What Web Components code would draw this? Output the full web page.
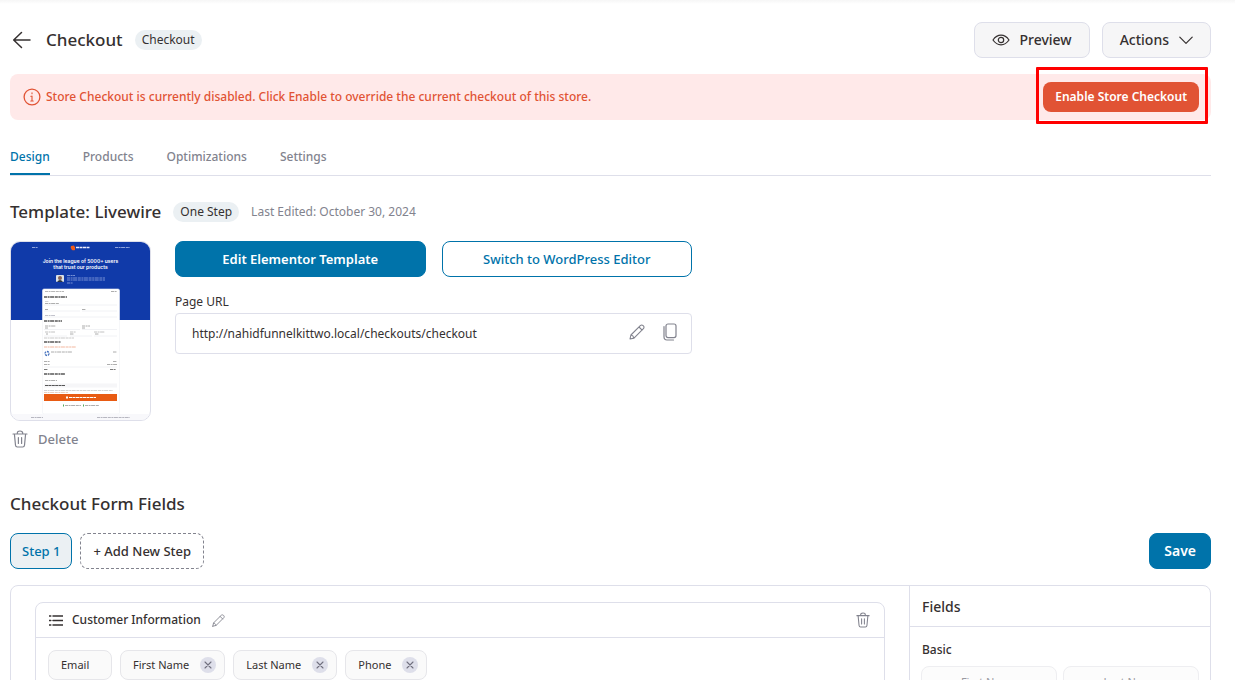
<!DOCTYPE html>
<html lang="en">
<head>
<meta charset="utf-8">
<meta name="viewport" content="width=device-width, initial-scale=1">
<title>Checkout</title>
<style>
  :root {
    --primary: #0073aa;
    --danger: #e15334;
    --ink: #353030;
    --muted: #82838e;
    --line: #dedfea;
    --tint: #ebf0f3;
  }
  html, body { margin: 0; height: 100%; }
  body {
    font: 500 13px/20px "Noto Sans", "Open Sans", sans-serif;
    color: var(--ink);
    background: #fff;
    overflow: hidden;
  }
</style>
</head>
<body>
<checkout-page></checkout-page>

<script>
const define = (name, html, setup) => {
  const template = document.createElement('template');
  template.innerHTML = `<style>
    *, *::before, *::after { box-sizing: border-box; }
    button, input { font: inherit; color: inherit; margin: 0; }
    button { cursor: pointer; background: none; border: 0; padding: 0; }
    h1, h2, h3, p { margin: 0; font-weight: inherit; font-size: inherit; }
  </style>${html}`;
  customElements.define(name, class extends HTMLElement {
    constructor() {
      super();
      this.attachShadow({ mode: 'open' }).append(template.content.cloneNode(true));
    }
    connectedCallback() { if (setup) setup.call(this, this.shadowRoot); }
  });
};

const icons = {
  back: ['0 0 20 18', '<path d="M9.500 1.500 1.700 9l7.800 7.500M2 9h16" stroke-width="1.500"/>'],
  eye: ['0 0 18 12', '<path d="M1 6c2.2-3.200 4.900-4.800 8-4.800s5.800 1.600 8 4.800c-2.200 3.200-4.900 4.800-8 4.800S3.200 9.200 1 6Z" stroke-width="1.200"/><circle cx="9" cy="6" r="2.700" stroke-width="1.200"/>'],
  down: ['0 0 14 9', '<path d="m.8 1.200 6.200 6.200 6.200-6.200" stroke-width="1.200"/>'],
  info: ['0 0 18 18', '<circle cx="9" cy="9" r="7.900" stroke-width="1.300"/><path d="M9 8v5M9 4.800v1M7.800 8.200H9M7.800 13h2.400" stroke-width="1.100"/>'],
  trash: ['0 0 16 18', '<path d="M1 4h14M5.300 4V3.200C5.300 1.800 6.300 1 8 1s2.700.8 2.700 2.200V4M2.400 4l1.100 11.300c.1 1 .8 1.700 1.800 1.700h5.400c1 0 1.700-.7 1.800-1.700L13.600 4M6.400 7.500v6M9.600 7.500v6" stroke-width="1.200"/>'],
  pencil: ['0 0 16 16', '<path d="M1 15l.9-4L11.300 1.700c.8-.8 2-.8 2.800-.1l.3.300c.8.8.8 2 0 2.800L5 14.100 1 15ZM10 3l3.100 3.100M1.900 11c1.500.2 2.600 1.300 3.100 3.100" stroke-width="1.100"/>'],
  copy: ['0 0 14 18', '<rect x="3" y="1" width="10" height="13.600" rx="2" stroke-width="1.200"/><path d="M1 3.500v10.300C1 15.700 2.200 17 4 17h6.500" stroke-width="1.200"/>'],
  list: ['0 0 14 12', '<path d="M4 2h10M4 6.500h10M4 11h10M.3 2h1.500M.3 6.500h1.500M.3 11h1.500" stroke-width="1.500"/>'],
  close: ['0 0 8 8', '<path d="m1 1 6 6M7 1 1 7" stroke-width="1.100"/>']
};
define('ui-icon', `<style>
  :host { display: inline-flex; flex: none; }
  svg { display: block; fill: none; stroke: currentColor; stroke-linecap: round; stroke-linejoin: round; }
</style>`, function (root) {
  const [box, shape] = icons[this.getAttribute('name')];
  const [, , w, h] = box.split(' ').map(Number);
  const width = Number(this.getAttribute('width')) || w;
  root.innerHTML += `<svg viewBox="${box}" width="${width}" height="${Math.round(width * h / w)}" aria-hidden="true">${shape}</svg>`;
});

define('ui-button', `<style>
  :host { display: inline-flex; flex: none; }
  button { flex: 1; display: inline-flex; align-items: center; justify-content: center;
    gap: 10px; height: 36px; padding: 0 17px; border: 1px solid var(--line); border-radius: 8px;
    background: #f6f6f7; white-space: nowrap; }
  :host([kind=primary]) button { background: var(--primary); border-color: var(--primary); color: #fff; font-weight: 600; padding: 0 14px; }
  :host([kind=outline]) button { background: #fff; border-color: var(--primary); color: var(--primary); }
  :host([kind=danger]) button { background: var(--danger); border: 0; color: #fff; font-size: 12px; font-weight: 600; height: 30px; padding: 0 12px; }
  :host([kind=step]) button { background: var(--tint); border-color: var(--primary); color: var(--primary); padding: 0 11px; }
  :host([kind=dashed]) button { background: #fff; border: 1px dashed #82838e; padding: 0 12px; }
</style><button type="button"><slot></slot></button>`);

define('ui-badge', `<style>
  :host { display: inline-block; flex: none; padding: 0 7px; border-radius: 10px; background: var(--tint);
    font-size: 12px; line-height: 20px; font-weight: 400; }
</style><slot></slot>`);

define('page-header', `<style>
  :host { display: flex; align-items: center; height: 36px; }
  h1 { font-size: 17px; line-height: 24px; margin: 0 12px 0 14px; }
  .actions { margin-left: auto; display: flex; gap: 12px; font-size: 14px; }
  .back { display: flex; padding: 0 0 0 2px; }
</style>
<button class="back" type="button" aria-label="Back"><ui-icon name="back"></ui-icon></button>
<h1>Checkout</h1><ui-badge>Checkout</ui-badge>
<div class="actions">
  <ui-button><ui-icon name="eye"></ui-icon><span>Preview</span></ui-button>
  <ui-button><span>Actions</span><ui-icon name="down"></ui-icon></ui-button>
</div>`);

define('notice-bar', `<style>
  :host { display: flex; align-items: center; gap: 5px; height: 46px; padding: 0 12px 0 13px;
    border-radius: 8px; background: #ffe9e9; color: var(--danger); font-size: 12px; }
  .action { position: relative; display: flex; margin-left: auto; }
  .highlight { position: absolute; inset: -15px -9px -12px -7px; border: 3px solid #ff0000; border-radius: 1px; pointer-events: none; }
</style>
<ui-icon name="info"></ui-icon><p><slot></slot></p>
<div class="action"><ui-button kind="danger">Enable Store Checkout</ui-button><span class="highlight"></span></div>`);

define('page-tabs', `<style>
  :host { display: block; border-bottom: 1px solid var(--line); font-size: 12px; }
  nav { display: flex; gap: 33px; }
  a { color: var(--muted); text-decoration: none; padding: 8px 0 6px; border-bottom: 2px solid transparent; }
  a[aria-current] { color: var(--primary); border-color: var(--primary); }
</style>
<nav aria-label="Sections"><a href="#design" aria-current="page">Design</a><a href="#products">Products</a><a href="#optimizations">Optimizations</a><a href="#settings">Settings</a></nav>`);

define('template-preview', `<style>
  :host { display: block; box-sizing: border-box; width: 141px; height: 180px; border: 1px solid var(--line); border-radius: 10px; overflow: hidden; }
  svg { display: block; width: 100%; height: 100%; }
  .t { fill: #fff; font: 600 5px Inter, sans-serif; }
  .dash line { stroke-dasharray: 3 .6 2 .5 4 .7; opacity: .75; }
</style>
<svg viewBox="0 0 139 178" role="img" aria-label="Livewire template preview">
  <rect width="139" height="78" fill="#103aa9"/>
  <g class="dash" stroke="#b9c7ef" stroke-width="1"><line x1="21" x2="27" y1="5.500" y2="5.500"/><line x1="104" x2="119" y1="5.500" y2="5.500"/></g>
  <path d="M60 4a3 3 0 0 0 4 4V4.500h-1V3.500Z" fill="#f05a19"/><line x1="65" x2="79" y1="5.500" y2="5.500" stroke="#eef" stroke-width="1.500" stroke-dasharray="3 .5"/>
  <text class="t" x="69.500" y="21" text-anchor="middle">Join the league of 5000+ users</text>
  <text class="t" x="69.500" y="27" text-anchor="middle">that trust our products</text>
  <rect x="45" y="33" width="8" height="7" rx="1" fill="#dce2e6"/><circle cx="49" cy="36" r="2" fill="#8a6254"/><path d="M46 40q3-4 6 0z" fill="#2b3442"/>
  <g class="dash" stroke="#bccbf4" stroke-width=".8"><line x1="56" x2="64" y1="33.500" y2="33.500"/><line x1="56" x2="94" y1="36" y2="36"/><line x1="56" x2="94" y1="38" y2="38"/><line x1="56" x2="62" y1="41" y2="41"/></g>
  <rect x="31.500" y="47" width="77" height="125" rx="1.500" fill="#fff" stroke="#f0f1f5" stroke-width=".6"/>
  <g class="dash" stroke="#777" stroke-width=".8"><line x1="34" x2="53" y1="49.500" y2="49.500" stroke-width=".7"/><line x1="100" x2="106" y1="49.500" y2="49.500"/>
    <g stroke="#222" stroke-width="1.300"><line x1="33" x2="56" y1="55" y2="55"/><line x1="33" x2="51" y1="79" y2="79"/><line x1="33" x2="50" y1="100" y2="100"/><line x1="33" x2="54" y1="132" y2="132"/></g>
    <line x1="34" x2="38" y1="59.500" y2="59.500" stroke="#bbb"/><line x1="34" x2="48" y1="61.500" y2="61.500"/>
    <line x1="34" x2="37" y1="67.500" y2="67.500"/><line x1="71" x2="75" y1="67.500" y2="67.500"/><line x1="34" x2="44" y1="73.500" y2="73.500" stroke="#99a"/>
    <line x1="34" x2="45" y1="84" y2="84"/><line x1="71" x2="79" y1="84" y2="84"/><line x1="34" x2="37" y1="86" y2="86"/><line x1="71" x2="74" y1="86" y2="86"/>
    <line x1="34" x2="44" y1="90" y2="90" stroke="#999"/><line x1="59" x2="65" y1="90" y2="90" stroke="#999"/><line x1="83" x2="94" y1="90" y2="90" stroke="#999"/><line x1="35" x2="37" y1="92" y2="92"/><line x1="59" x2="63" y1="92" y2="92"/><line x1="84" x2="88" y1="92" y2="92"/>
    <line x1="33" x2="63" y1="96" y2="96" stroke="#999" stroke-width=".7"/><line x1="33" x2="65" y1="105" y2="105" stroke="#ee895f"/>
    <line x1="40" x2="61" y1="110" y2="110"/><line x1="102" x2="106" y1="110" y2="110"/>
    <line x1="33" x2="39" y1="119.500" y2="119.500"/><line x1="102" x2="106" y1="119.500" y2="119.500"/><line x1="33" x2="39" y1="122.500" y2="122.500"/><line x1="96" x2="106" y1="122.500" y2="122.500"/><line x1="33" x2="37" y1="127.500" y2="127.500" stroke="#222"/><line x1="99" x2="105" y1="127.500" y2="127.500" stroke="#222"/>
    <line x1="34" x2="46" y1="138.500" y2="138.500"/><line x1="33" x2="102" y1="148.500" y2="148.500" stroke="#aaa" stroke-width=".7"/><line x1="33" x2="57" y1="150.500" y2="150.500" stroke="#d9a68a" stroke-width=".7"/>
    <line x1="54" x2="70" y1="163.500" y2="163.500"/><line x1="74" x2="88" y1="163.500" y2="163.500"/></g>
  <circle cx="36" cy="111.500" r="2" fill="none" stroke="#4471bd" stroke-width="1.300" stroke-dasharray="2 .8"/>
  <g stroke="#eeeff3" stroke-width=".8"><path d="M33 63h73M33 69h36M71 69h35M33 75h73M33 87.500h36M71 87.500h35M33 94h23M59 94h22M83 94h23M33 125h73"/></g>
  <rect x="33" y="141.500" width="73" height="4" fill="#f6f6f8"/><line x1="34" x2="54" y1="143.500" y2="143.500" stroke="#555" stroke-dasharray="3 .4"/>
  <rect x="33" y="152" width="73" height="7" fill="#e85b13"/><line x1="58" x2="85" y1="155.500" y2="155.500" stroke="#fff" stroke-width="1.200" stroke-dasharray="3 .5"/><path d="M55 154.500h2v2h-2z" fill="#fff"/>
  <path d="M52 162.500h1v2h-1zM72 162.500h1v2h-1z" fill="#4daa57"/>
  <rect y="172" width="139" height="6" fill="#f8f8fb"/>
  <g class="dash" stroke="#8b8c98" stroke-width=".8"><line x1="20" x2="32" y1="175.500" y2="175.500"/><line x1="86" x2="119" y1="175.500" y2="175.500"/></g>
</svg>`);

define('url-field', `<style>
  :host { display: block; }
  label { display: block; font-size: 12px; line-height: 16px; font-weight: 400; margin-bottom: 3px; }
  .box { display: flex; align-items: center; gap: 18px; height: 41px; padding: 0 14px 0 16px;
    border: 1px solid var(--line); border-radius: 4px; color: var(--muted); }
  input { flex: 1; min-width: 0; border: 0; padding: 0; outline: 0; background: none; color: var(--ink); font-size: 12px; font-weight: 400; }
  button { display: flex; padding-bottom: 4px; }
</style>
<label for="url">Page URL</label>
<div class="box"><input id="url" type="text" readonly value="http://nahidfunnelkittwo.local/checkouts/checkout">
<button type="button" aria-label="Edit URL"><ui-icon name="pencil"></ui-icon></button>
<button type="button" aria-label="Copy URL"><ui-icon name="copy"></ui-icon></button></div>`);

define('template-section', `<style>
  :host { display: block; }
  header { display: flex; align-items: center; gap: 12px; height: 24px; }
  h2 { font-size: 17px; line-height: 24px; }
  header p { color: var(--muted); font-size: 12px; font-weight: 400; }
  .row { display: flex; gap: 24px; margin-top: 17px; }
  .delete { display: flex; align-items: center; gap: 10px; margin-top: 8px; padding-left: 2px; color: var(--muted); font: inherit; }
  .details { flex: 0 1 517px; }
  .buttons { display: grid; grid-template-columns: 1fr 1fr; gap: 16px; margin-bottom: 17px; }
</style>
<header><h2>Template: Livewire</h2><ui-badge>One Step</ui-badge><p>Last Edited: October 30, 2024</p></header>
<div class="row">
  <div><template-preview></template-preview>
    <button class="delete" type="button"><ui-icon name="trash"></ui-icon>Delete</button></div>
  <div class="details">
    <div class="buttons"><ui-button kind="primary">Edit Elementor Template</ui-button><ui-button kind="outline">Switch to WordPress Editor</ui-button></div>
    <url-field></url-field>
  </div>
</div>`);

define('field-chip', `<style>
  :host { display: inline-flex; box-sizing: border-box; align-items: center; gap: 11px; height: 30px; min-width: 64px; padding: 0 12px;
    border: 1px solid #e6e6ea; border-radius: 8px; background: #fafafa; font-size: 11px; font-weight: 400; }
  :host([removable]) { padding-right: 8px; }
  button { display: none; }
  :host([removable]) button { display: flex; align-items: center; justify-content: center; width: 16px; height: 16px; border-radius: 50%; background: var(--line); color: #706f7e; }
</style><slot></slot><button type="button" aria-label="Remove field"><ui-icon name="close"></ui-icon></button>`);

define('form-section', `<style>
  :host { display: block; border: 1px solid var(--line); border-radius: 8px; }
  header { display: flex; align-items: center; gap: 9px; height: 35px; padding: 0 14px 0 13px; border-bottom: 1px solid var(--line); }
  h3 { font-size: 12px; margin-right: 2px; }
  header button { display: flex; color: var(--muted); }
  header button:last-child { margin-left: auto; }
  .chips { display: flex; flex-wrap: wrap; gap: 8px; padding: 12px; min-height: 96px; }
</style>
<header><ui-icon name="list"></ui-icon><h3><slot name="title"></slot></h3>
<button type="button" aria-label="Rename section"><ui-icon name="pencil" width="13"></ui-icon></button>
<button type="button" aria-label="Delete section"><ui-icon name="trash" width="14"></ui-icon></button></header>
<div class="chips"><slot></slot></div>`);

define('field-palette', `<style>
  :host { display: block; }
  h3 { font-size: 14px; height: 41px; line-height: 41px; padding: 0 12px; border-bottom: 1px solid var(--line); }
  h4 { margin: 13px 12px 6px; font: inherit; font-size: 12px; line-height: 20px; }
  .grid { display: grid; grid-template-columns: 1fr 1fr; gap: 6px; padding: 0 11px; }
  button { height: 32px; border: 1px solid #eeeef1; border-radius: 8px; background: #fcfcfc; color: #9a9aa2; font-size: 11px; font-weight: 400; }
</style>
<h3>Fields</h3><h4>Basic</h4>
<div class="grid"><button type="button" disabled>First Name</button><button type="button" disabled>Last Name</button></div>`);

define('form-builder', `<style>
  :host { display: block; }
  h2 { font-size: 17px; line-height: 24px; }
  .steps { display: flex; gap: 8px; margin: 17px 0 16px; }
  .save { margin-left: auto; font-size: 14px; }
  .panel { display: grid; grid-template-columns: minmax(0, 1fr) 301px; border: 1px solid var(--line); border-radius: 8px; }
  .canvas { padding: 16px 24px; }
  field-palette { border-left: 1px solid var(--line); }
</style>
<h2>Checkout Form Fields</h2>
<div class="steps"><ui-button kind="step">Step 1</ui-button><ui-button kind="dashed">+ Add New Step</ui-button><ui-button class="save" kind="primary">Save</ui-button></div>
<div class="panel"><div class="canvas"><form-section><span slot="title">Customer Information</span>
<field-chip>Email</field-chip><field-chip removable>First Name</field-chip><field-chip removable>Last Name</field-chip><field-chip removable>Phone</field-chip></form-section></div>
<field-palette></field-palette></div>`);

define('checkout-page', `<style>
  :host { display: block; height: 100vh; overflow: auto; scrollbar-width: none;
    background: linear-gradient(#f6f6f6, #fff 4px); }
  main { padding: 22px 24px 24px 10px; }
  notice-bar { margin: 16px 0 19px; }
  template-section { margin-top: 24px; }
  form-builder { margin-top: 43px; }
</style>
<main><page-header></page-header>
<notice-bar>Store Checkout is currently disabled. Click Enable to override the current checkout of this store.</notice-bar>
<page-tabs></page-tabs><template-section></template-section><form-builder></form-builder></main>`);
</script>
</body>
</html>
